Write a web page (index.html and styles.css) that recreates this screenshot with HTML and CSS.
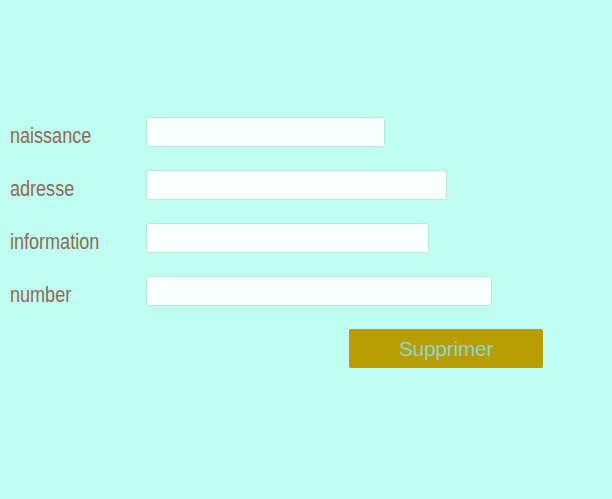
FILE: index.html
```html
<!DOCTYPE html>
<html lang="fr">
<head>
<meta charset="utf-8">
<title>Formulaire</title>
<link rel="stylesheet" href="styles.css">
</head>
<body>
<form class="form">
  <div class="row">
    <label class="label" for="naissance">naissance</label>
    <input class="field field-1" id="naissance" type="text">
  </div>
  <div class="row">
    <label class="label" for="adresse">adresse</label>
    <input class="field field-2" id="adresse" type="text">
  </div>
  <div class="row">
    <label class="label" for="information">information</label>
    <input class="field field-3" id="information" type="text">
  </div>
  <div class="row">
    <label class="label" for="number">number</label>
    <input class="field field-4" id="number" type="text">
  </div>
  <div class="row actions">
    <button class="btn" type="button">Supprimer</button>
  </div>
</form>
</body>
</html>
```
FILE: styles.css
```css
html, body {
  margin: 0;
  padding: 0;
  background: #c0fff0;
  height: 100%;
}
body {
  font-family: "Liberation Sans", Arial, sans-serif;
}
.form {
  display: flex;
  flex-direction: column;
  gap: 23px;
  padding: 117px 0 0 10px;
}
.row {
  display: grid;
  grid-template-columns: 136px auto;
  grid-template-rows: 30px;
  align-items: center;
  justify-content: start;
}
.label {
  display: block;
  height: 30px;
  font-size: 22px;
  line-height: 30px;
  white-space: nowrap;
  color: #8b6b58;
  transform: translateY(4px) scaleX(0.82);
  transform-origin: left center;
}
.field {
  box-sizing: border-box;
  height: 30px;
  margin: 0;
  padding: 0 6px;
  background: #f8fffd;
  border: 1px solid #b4eadc;
  border-radius: 3px;
  outline: none;
}
.field-1 { width: 239px; }
.field-2 { width: 301px; }
.field-3 { width: 283px; }
.field-4 { width: 346px; }
.actions {
  grid-template-columns: auto;
  grid-template-rows: 39px;
  padding-left: 339px;
}
.btn {
  box-sizing: border-box;
  width: 194px;
  height: 39px;
  margin: 0;
  padding: 0;
  background: #b89c00;
  border: none;
  border-radius: 2px;
  color: #8fd6cf;
  font-family: "Liberation Sans", Arial, sans-serif;
  font-size: 21px;
  letter-spacing: -0.3px;
}
```
